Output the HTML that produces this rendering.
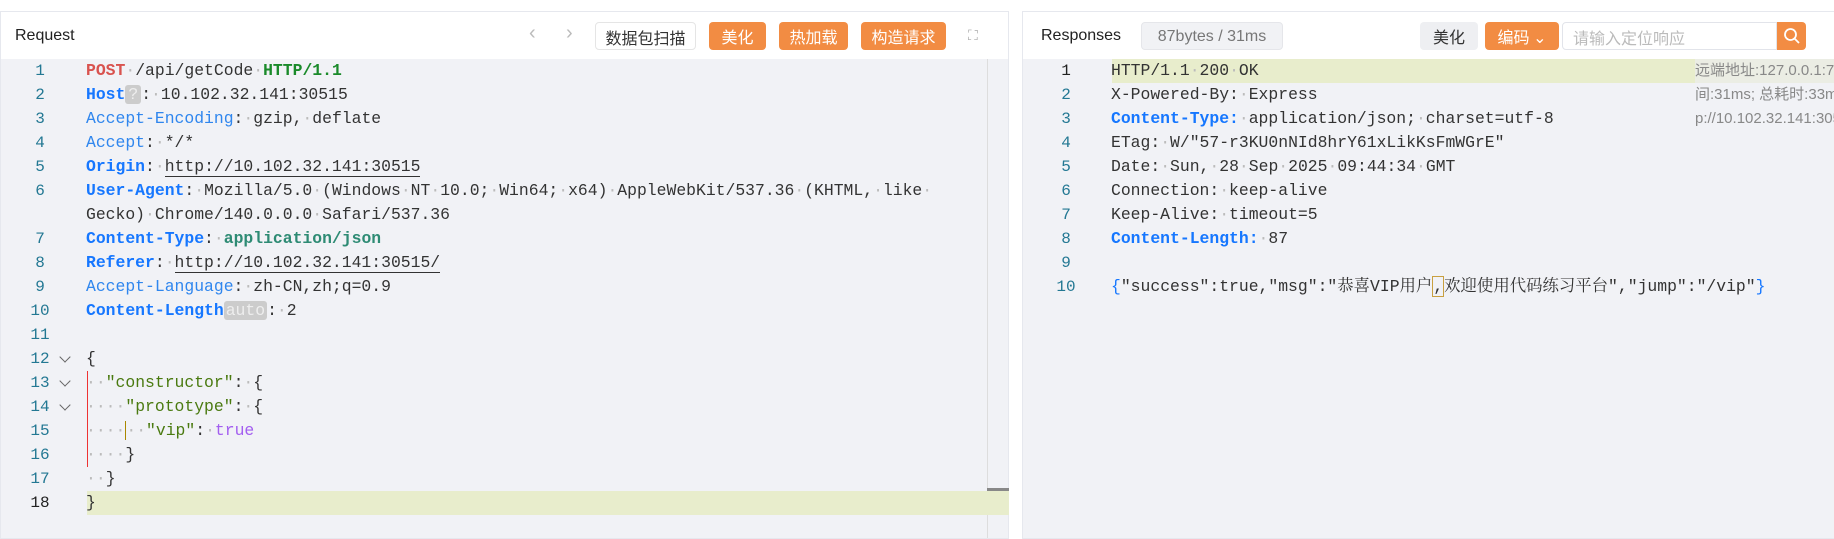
<!DOCTYPE html>
<html><head><meta charset="utf-8"><style>
*{margin:0;padding:0;box-sizing:border-box}
body{width:1834px;height:539px;background:#fff;position:relative;overflow:hidden;font-family:"Liberation Sans","Noto Sans CJK SC",sans-serif}
.panel{position:absolute;top:11px;bottom:0;background:#f1f2f6;border:1px solid #e6e8ee}
.hdr{position:absolute;left:0;right:0;top:0;height:47px;background:#fff}
.ttl{position:absolute;top:15px;font-size:16px;color:#222}
.btn{position:absolute;top:10px;height:28px;border-radius:4px;font-size:16px;line-height:28px;text-align:center;font-family:"Noto Sans CJK SC",sans-serif}
.or{background:#f28c43;color:#fff}
.ln{position:absolute;font-family:"Liberation Mono",monospace;font-size:16.4px;height:24px;line-height:24px;white-space:pre;color:#333}
.n{position:absolute;width:40px;text-align:center;font-family:"Liberation Mono",monospace;font-size:16px;line-height:24px;color:#237893}
i{font-style:normal;color:#bbb}
.k{color:#1677ff;font-weight:bold}.kl{color:#2f86ee}
.g{color:#4a7a10}.p{color:#a35ef0}
.fd{position:absolute;left:58px;width:14px;height:24px}
.fd:after{content:"";position:absolute;left:3px;top:6px;width:7px;height:7px;border-right:1.3px solid #666;border-bottom:1.3px solid #666;transform:rotate(45deg)}
.side{position:absolute;left:672px;font-size:15px;line-height:24px;color:#888;white-space:nowrap}
</style></head><body>
<div class="panel" style="left:0;width:1009px">
 <div class="hdr">
  <div class="ttl" style="left:14px">Request</div>
  <div style="position:absolute;left:528px;top:10px;color:#bbb;font-size:20px">&#8249;</div>
  <div style="position:absolute;left:565px;top:10px;color:#bbb;font-size:20px">&#8250;</div>
  <div class="btn" style="left:594px;width:101px;border:1px solid #e5e5e5;color:#333">数据包扫描</div>
  <div class="btn or" style="left:708px;width:57px">美化</div>
  <div class="btn or" style="left:778px;width:69px">热加载</div>
  <div class="btn or" style="left:860px;width:85px">构造请求</div>
  <div style="position:absolute;left:967px;top:15px;color:#aaa;font-size:14px">⛶</div>
 </div>
 <div style="position:absolute;left:986px;top:47px;bottom:0;border-left:1px solid #ddd"></div>
 <div style="position:absolute;left:986px;top:476px;width:22px;height:3px;background:#888"></div>
 <div style="position:absolute;left:86px;top:479px;width:922px;height:24px;background:#e8edcc"></div>
 <div style="position:absolute;left:86px;top:359px;height:96px;border-left:1.5px solid #e33"></div>
</div>
<div class="panel" style="left:1022px;right:-2px">
 <div class="hdr">
  <div class="ttl" style="left:18px">Responses</div>
  <div class="btn" style="left:118px;width:142px;background:#f1f2f5;border:1px solid #e5e6ea;color:#777;font-family:'Liberation Sans',sans-serif">87bytes / 31ms</div>
  <div class="btn" style="left:397px;width:58px;background:#eeeff2;color:#333">美化</div>
  <div class="btn or" style="left:462px;width:74px">编码 ⌄</div>
  <div class="btn" style="left:539px;width:215px;border:1px solid #e2e4ea;text-align:left;padding-left:10px;color:#bbb;border-radius:4px 0 0 4px">请输入定位响应</div>
  <div class="btn or" style="left:754px;width:29px;border-radius:0 4px 4px 0"><svg width="18" height="18" viewBox="0 0 18 18" style="margin-top:5px"><circle cx="7.5" cy="7.5" r="5.5" fill="none" stroke="#fff" stroke-width="1.8"/><path d="M11.5 11.5L16 16" stroke="#fff" stroke-width="1.8"/></svg></div>
 </div>
 <div style="position:absolute;left:89px;top:47px;width:583px;height:24px;background:#e8edcc"></div>
 <div style="position:absolute;left:672px;top:47px;width:150px;height:24px;background:#ebede4"></div>
 <div class="side" style="top:47px">远端地址:127.0.0.1:7890</div>
 <div class="side" style="top:71px">间:31ms; 总耗时:33ms</div>
 <div class="side" style="top:95px">p://10.102.32.141:30515</div>
</div>

<!-- request lines -->
<div class="n" style="left:20px;top:59px">1</div><div class="ln" style="left:86px;top:59px"><span style="color:#d9534f;font-weight:bold">POST</span><i>·</i>/api/getCode<i>·</i><span style="color:#1a8a2a;font-weight:bold">HTTP/1.1</span></div>
<div class="n" style="left:20px;top:83px">2</div><div class="ln" style="left:86px;top:83px"><span class="k">Host</span><span style="background:#ccc;color:#eee;border-radius:3px;padding:0 3px">?</span>:<i>·</i>10.102.32.141:30515</div>
<div class="n" style="left:20px;top:107px">3</div><div class="ln" style="left:86px;top:107px"><span class="kl">Accept-Encoding</span>:<i>·</i>gzip,<i>·</i>deflate</div>
<div class="n" style="left:20px;top:131px">4</div><div class="ln" style="left:86px;top:131px"><span class="kl">Accept</span>:<i>·</i>*/*</div>
<div class="n" style="left:20px;top:155px">5</div><div class="ln" style="left:86px;top:155px"><span class="k">Origin</span>:<i>·</i><span style="border-bottom:1px solid #333">http://10.102.32.141:30515</span></div>
<div class="n" style="left:20px;top:179px">6</div><div class="ln" style="left:86px;top:179px"><span class="k">User-Agent</span>:<i>·</i>Mozilla/5.0<i>·</i>(Windows<i>·</i>NT<i>·</i>10.0;<i>·</i>Win64;<i>·</i>x64)<i>·</i>AppleWebKit/537.36<i>·</i>(KHTML,<i>·</i>like<i>·</i></div>
<div class="ln" style="left:86px;top:203px">Gecko)<i>·</i>Chrome/140.0.0.0<i>·</i>Safari/537.36</div>
<div class="n" style="left:20px;top:227px">7</div><div class="ln" style="left:86px;top:227px"><span class="k">Content-Type</span>:<i>·</i><span style="color:#2e8b74;font-weight:bold">application/json</span></div>
<div class="n" style="left:20px;top:251px">8</div><div class="ln" style="left:86px;top:251px"><span class="k">Referer</span>:<i>·</i><span style="border-bottom:1px solid #333">http://10.102.32.141:30515/</span></div>
<div class="n" style="left:20px;top:275px">9</div><div class="ln" style="left:86px;top:275px"><span class="kl">Accept-Language</span>:<i>·</i>zh-CN,zh;q=0.9</div>
<div class="n" style="left:20px;top:299px">10</div><div class="ln" style="left:86px;top:299px"><span class="k">Content-Length</span><span style="background:#ccc;color:#eee;border-radius:3px;padding:0 2px">auto</span>:<i>·</i>2</div>
<div class="n" style="left:20px;top:323px">11</div>
<div class="n" style="left:20px;top:347px">12</div><div class="fd" style="top:347px"></div><div class="ln" style="left:86px;top:347px">{</div>
<div class="n" style="left:20px;top:371px">13</div><div class="fd" style="top:371px"></div><div class="ln" style="left:86px;top:371px"><i>··</i><span class="g">"constructor"</span>:<i>·</i>{</div>
<div class="n" style="left:20px;top:395px">14</div><div class="fd" style="top:395px"></div><div class="ln" style="left:86px;top:395px"><i>····</i><span class="g">"prototype"</span>:<i>·</i>{</div>
<div class="n" style="left:20px;top:419px">15</div><div class="ln" style="left:86px;top:419px"><i>····</i><span style="border-left:1px solid #a80"></span><i>··</i><span class="g">"vip"</span>:<i>·</i><span class="p">true</span></div>
<div class="n" style="left:20px;top:443px">16</div><div class="ln" style="left:86px;top:443px"><i>····</i>}</div>
<div class="n" style="left:20px;top:467px">17</div><div class="ln" style="left:86px;top:467px"><i>··</i>}</div>
<div class="n" style="left:20px;top:491px;color:#222">18</div><div class="ln" style="left:86px;top:491px">}</div>

<!-- response lines -->
<div class="n" style="left:1046px;top:59px;color:#222">1</div><div class="ln" style="left:1111px;top:59px">HTTP/1.1<i>·</i>200<i>·</i>OK</div>
<div class="n" style="left:1046px;top:83px">2</div><div class="ln" style="left:1111px;top:83px">X-Powered-By:<i>·</i>Express</div>
<div class="n" style="left:1046px;top:107px">3</div><div class="ln" style="left:1111px;top:107px"><span class="k">Content-Type:</span><i>·</i>application/json;<i>·</i>charset=utf-8</div>
<div class="n" style="left:1046px;top:131px">4</div><div class="ln" style="left:1111px;top:131px">ETag:<i>·</i>W/"57-r3KU0nNId8hrY61xLikKsFmWGrE"</div>
<div class="n" style="left:1046px;top:155px">5</div><div class="ln" style="left:1111px;top:155px">Date:<i>·</i>Sun,<i>·</i>28<i>·</i>Sep<i>·</i>2025<i>·</i>09:44:34<i>·</i>GMT</div>
<div class="n" style="left:1046px;top:179px">6</div><div class="ln" style="left:1111px;top:179px">Connection:<i>·</i>keep-alive</div>
<div class="n" style="left:1046px;top:203px">7</div><div class="ln" style="left:1111px;top:203px">Keep-Alive:<i>·</i>timeout=5</div>
<div class="n" style="left:1046px;top:227px">8</div><div class="ln" style="left:1111px;top:227px"><span class="k">Content-Length:</span><i>·</i>87</div>
<div class="n" style="left:1046px;top:251px">9</div>
<div class="n" style="left:1046px;top:275px">10</div><div class="ln" style="left:1111px;top:275px;font-family:'Liberation Mono','Noto Serif CJK SC',monospace"><span style="color:#1677ff">{</span>"success":true,"msg":"恭喜VIP用户<span style="border:1px solid #c9a040">,</span>欢迎使用代码练习平台","jump":"/vip"<span style="color:#1677ff">}</span></div>
</body></html>
